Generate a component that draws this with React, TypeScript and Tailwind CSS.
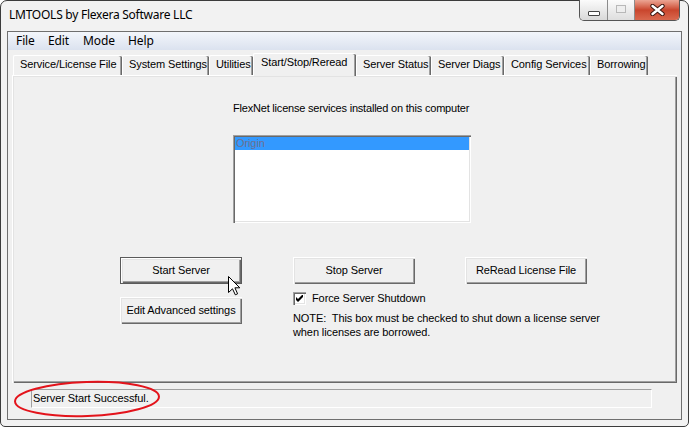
import React from "react"

// classic 3D edges
const raised =
  "shadow-[inset_1px_1px_0_#ffffff,inset_2px_2px_0_#e3e3e3,inset_-1px_-1px_0_#696969,inset_-2px_-2px_0_#a0a0a0]"
const sunken =
  "shadow-[inset_1px_1px_0_#a0a0a0,inset_2px_2px_0_#696969,inset_-1px_-1px_0_#ffffff,inset_-2px_-2px_0_#e3e3e3]"

const tabs = [
  { label: "Service/License File", w: "w-[109px]" },
  { label: "System Settings", w: "w-[87px]" },
  { label: "Utilities", w: "w-[44px]" },
  { label: "Start/Stop/Reread", w: "w-[103px]", active: true },
  { label: "Server Status", w: "w-[75px]" },
  { label: "Server Diags", w: "w-[73px]" },
  { label: "Config Services", w: "w-[86px]" },
  { label: "Borrowing", w: "w-[58px]" },
]

function WindowButtons() {
  return (
    <div className="-mt-[1px] mr-[2px] flex h-[21px] overflow-hidden rounded-b-[5px] border border-t-0 border-[#555555]">
      <div className="flex w-[28px] items-end justify-center border-r border-[#8c8c8c] bg-linear-to-b from-[#fbfbfb] to-[#d9d9d9] pb-[4px]">
        <div className="h-[5px] w-[12px] rounded-[1px] border border-[#444444] bg-white" />
      </div>
      <div className="flex w-[27px] items-center justify-center border-r border-[#8c8c8c] bg-linear-to-b from-[#fbfbfb] to-[#dedede]">
        <div className="mb-[2px] h-[8px] w-[10px] border border-[#b8b8b8] bg-[#eeeeee]" />
      </div>
      <div className="flex w-[44px] items-center justify-center bg-linear-to-b from-[#eba594] via-[#c9452d] to-[#d9684e]">
        <svg width="15" height="12" viewBox="0 0 15 12">
          <path d="M2.5 2 L12.5 10 M12.5 2 L2.5 10" stroke="#3b1610" strokeWidth="4.4" strokeLinecap="round" />
          <path d="M2.5 2 L12.5 10 M12.5 2 L2.5 10" stroke="#ffffff" strokeWidth="2.4" strokeLinecap="round" />
        </svg>
      </div>
    </div>
  )
}

function Button({ children, isDefault }: { children: React.ReactNode; isDefault?: boolean }) {
  if (isDefault) {
    return (
      <div className="h-[27px] w-[122px] border border-[#5a5a5a] bg-[#f0f0f0]">
        <div className={`flex h-full w-full items-center justify-center ${raised}`}>{children}</div>
      </div>
    )
  }
  return (
    <div className={`flex h-[27px] w-[122px] items-center justify-center bg-[#f0f0f0] ${raised}`}>
      {children}
    </div>
  )
}

export default function App() {
  return (
    <div className="h-[427px] w-[689px] bg-white font-['Liberation_Sans',Arial,sans-serif] text-[11px] tracking-[-0.1px] text-black">
      <div className="flex h-full w-full flex-col rounded-t-[7px] rounded-b-[5px] border border-[#3c3c3c] bg-[#f2f2f2] px-[6px] pb-[6px]">
        {/* title bar */}
        <div className="flex h-[30px] items-start justify-between">
          <div className="pl-[2px] pt-[6px] font-['Noto_Sans',sans-serif] text-[12px] leading-[16px] tracking-[-0.25px]">
            LMTOOLS by Flexera Software LLC
          </div>
          <WindowButtons />
        </div>

        {/* client area */}
        <div className="flex flex-1 flex-col border border-[#6f6f6f] bg-[#f0f0f0]">
          {/* menu */}
          <div className="flex h-[18px] items-center bg-linear-to-b from-[#f3f6fb] to-[#dbe2ef] pl-[8px] font-['Noto_Sans',sans-serif] text-[12px] leading-[18px] tracking-[-0.1px]">
            <span className="w-[32px]">File</span>
            <span className="w-[35px]">Edit</span>
            <span className="w-[45px]">Mode</span>
            <span>Help</span>
          </div>
          <div className="h-[3px]" />

          {/* tabs */}
          <div className="relative z-10 flex h-[22px] items-end pl-[5px]">
            {tabs.map((t) =>
              t.active ? (
                <div
                  key={t.label}
                  className={`${t.w} -mb-[1px] h-[23px] whitespace-nowrap rounded-t-[2px] border-t border-l border-white bg-[#f0f0f0] pl-[7px] pt-[1px] leading-[14px] shadow-[inset_-1px_0_0_#696969,inset_-2px_0_0_#a0a0a0]`}
                >
                  {t.label}
                </div>
              ) : (
                <div
                  key={t.label}
                  className={`${t.w} h-[20px] whitespace-nowrap rounded-t-[2px] border-t border-l border-white bg-[#f0f0f0] pl-[6px] pt-[1px] leading-[14px] shadow-[inset_-1px_0_0_#696969,inset_-2px_0_0_#a0a0a0]`}
                >
                  {t.label}
                </div>
              )
            )}
          </div>

          {/* tab page */}
          <div className={`relative ml-[4px] flex h-[308px] w-[665px] flex-col bg-[#f0f0f0] ${raised}`}>
            <div className="ml-[221px] mt-[27px] leading-[13px] tracking-[-0.2px]">
              FlexNet license services installed on this computer
            </div>
            <div className={`ml-[221px] mt-[20px] h-[88px] w-[238px] bg-white p-[2px] ${sunken}`}>
              <div className="h-[13px] bg-[#3399ff] pl-[1px] leading-[13px] text-[#6c7090]">Origin</div>
            </div>

            <div className="ml-[108px] mt-[34px] flex">
              <Button isDefault>Start Server</Button>
              <div className="ml-[51px]">
                <Button>Stop Server</Button>
              </div>
              <div className="ml-[50px]">
                <Button>ReRead License File</Button>
              </div>
            </div>

            <div className="ml-[108px] mt-[8px] flex items-start">
              <div className="mt-[5px]">
                <Button>Edit Advanced settings</Button>
              </div>
              <div className="ml-[51px] flex flex-col">
                <div className="flex h-[13px] items-center">
                  <div className={`flex h-[13px] w-[13px] items-center justify-center bg-white ${sunken}`}>
                    <svg width="7" height="7" viewBox="0 0 7 7">
                      <path d="M0 2 L2 4 L6 0 H7 V2 L2 7 L0 5 Z" fill="#000000" />
                    </svg>
                  </div>
                  <span className="ml-[6px] leading-[13px]">Force Server Shutdown</span>
                </div>
                <div className="mt-[6px] whitespace-pre leading-[14px]">
                  {"NOTE:  This box must be checked to shut down a license server\nwhen licenses are borrowed."}
                </div>
              </div>
            </div>

            {/* mouse pointer */}
            <svg
              className="absolute left-[216px] top-[201px]"
              width="13"
              height="20"
              viewBox="0 0 13 20"
            >
              <path
                d="M0.5 0.5 L0.5 16.5 L4.5 12.8 L7.3 18.8 L9.6 17.8 L6.9 11.8 L11.8 11.8 Z"
                fill="#ffffff"
                stroke="#000000"
                strokeWidth="1"
                strokeLinejoin="miter"
              />
            </svg>
          </div>

          {/* status bar */}
          <div className="relative flex-1 pl-[23px] pt-[6px]">
            <div className="h-[19px] w-[621px] border-t border-l border-b border-r border-t-[#a0a0a0] border-l-[#a0a0a0] border-b-white border-r-white pl-[1px] leading-[17px]">
              Server Start Successful.
            </div>
            <svg className="absolute left-[4px] top-[-3px]" width="152" height="40" viewBox="0 0 152 40">
              <ellipse
                cx="75"
                cy="19"
                rx="72"
                ry="17"
                fill="none"
                stroke="#e3131b"
                strokeWidth="2"
                transform="rotate(-2 75 19)"
              />
            </svg>
          </div>
        </div>
      </div>
    </div>
  )
}
